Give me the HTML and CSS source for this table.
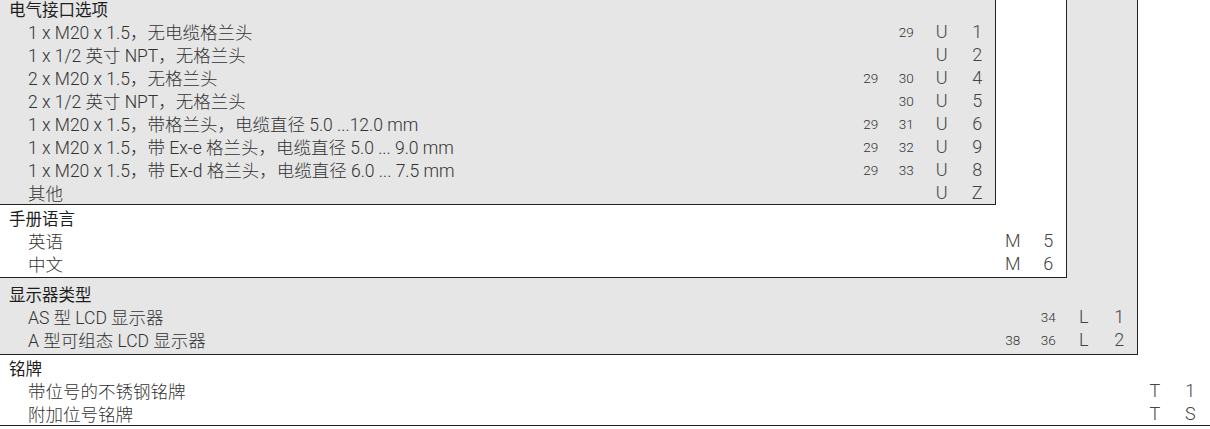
FILE: index.html
```html
<!DOCTYPE html>
<html lang="zh-CN">
<head>
<meta charset="utf-8">
<title>订购选项</title>
<link rel="stylesheet" href="styles.css">
</head>
<body>
<div class="sheet">
  <div class="box s3">
    <div class="box s2">
      <div class="box s1">
        <div class="rows p1">
          <div class="row head"><span class="label">电气接口选项</span></div>
          <div class="row"><span class="label">1 x M20 x 1.5，无电缆格兰头</span><span class="c n"></span><span class="c n">29</span><span class="c k">U</span><span class="c k">1</span></div>
          <div class="row"><span class="label">1 x 1/2 英寸 NPT，无格兰头</span><span class="c n"></span><span class="c n"></span><span class="c k">U</span><span class="c k">2</span></div>
          <div class="row"><span class="label">2 x M20 x 1.5，无格兰头</span><span class="c n">29</span><span class="c n">30</span><span class="c k">U</span><span class="c k">4</span></div>
          <div class="row"><span class="label">2 x 1/2 英寸 NPT，无格兰头</span><span class="c n"></span><span class="c n">30</span><span class="c k">U</span><span class="c k">5</span></div>
          <div class="row"><span class="label">1 x M20 x 1.5，带格兰头，电缆直径 5.0 ...12.0 mm</span><span class="c n">29</span><span class="c n">31</span><span class="c k">U</span><span class="c k">6</span></div>
          <div class="row"><span class="label">1 x M20 x 1.5，带 Ex-e 格兰头，电缆直径 5.0 ... 9.0 mm</span><span class="c n">29</span><span class="c n">32</span><span class="c k">U</span><span class="c k">9</span></div>
          <div class="row"><span class="label">1 x M20 x 1.5，带 Ex-d 格兰头，电缆直径 6.0 ... 7.5 mm</span><span class="c n">29</span><span class="c n">33</span><span class="c k">U</span><span class="c k">8</span></div>
          <div class="row"><span class="label">其他</span><span class="c n"></span><span class="c n"></span><span class="c k">U</span><span class="c k">Z</span></div>
        </div>
      </div>
      <div class="rows p2">
        <div class="row head"><span class="label">手册语言</span></div>
        <div class="row"><span class="label">英语</span><span class="c k">M</span><span class="c k">5</span></div>
        <div class="row"><span class="label">中文</span><span class="c k">M</span><span class="c k">6</span></div>
      </div>
    </div>
    <div class="rows p3">
      <div class="row head"><span class="label">显示器类型</span></div>
      <div class="row"><span class="label">AS 型 LCD 显示器</span><span class="c n"></span><span class="c n">34</span><span class="c k">L</span><span class="c k">1</span></div>
      <div class="row"><span class="label">A 型可组态 LCD 显示器</span><span class="c n">38</span><span class="c n">36</span><span class="c k">L</span><span class="c k">2</span></div>
    </div>
  </div>
  <div class="rows p4">
    <div class="row head"><span class="label">铭牌</span></div>
    <div class="row"><span class="label">带位号的不锈钢铭牌</span><span class="c k">T</span><span class="c k">1</span></div>
    <div class="row"><span class="label">附加位号铭牌</span><span class="c k">T</span><span class="c k">S</span></div>
  </div>
</div>
</body>
</html>
```

FILE: styles.css
```css
html, body {
  margin: 0;
  padding: 0;
  background: #ffffff;
}

body {
  font-family: Roboto, "Noto Sans CJK SC", sans-serif;
  color: #333333;
  overflow: hidden;
}

.sheet {
  margin-top: -3px;
  width: 1210px;
  border-bottom: 1px solid #222222;
}

.box {
  box-sizing: border-box;
  border-right: 1px solid #222222;
  border-bottom: 1px solid #222222;
}

.s3 {
  width: 1138px;
  background: #e6e6e6;
}

.s2 {
  width: 1067px;
  background: #ffffff;
}

.s1 {
  width: 996px;
  background: #e6e6e6;
}

.p2 {
  padding-top: 1px;
  padding-bottom: 2px;
}

.p3 {
  padding-top: 4px;
  padding-bottom: 3px;
}

.p4 {
  padding-top: 1px;
  padding-right: 2px;
}

.row {
  display: flex;
  align-items: center;
  height: 23px;
}

.label {
  flex: 1;
  padding-left: 28px;
  font-size: 17.5px;
  font-weight: 300;
  white-space: nowrap;
  color: #333333;
}

.head .label {
  padding-left: 9px;
  font-size: 16.5px;
  font-weight: 400;
  color: #1e1e1e;
}

.c {
  width: 35.5px;
  flex: none;
  text-align: center;
  white-space: nowrap;
}

.n {
  font-size: 13.5px;
  font-weight: 300;
  color: #333333;
}

.k {
  font-size: 18px;
  font-weight: 300;
  color: #444444;
}
```
